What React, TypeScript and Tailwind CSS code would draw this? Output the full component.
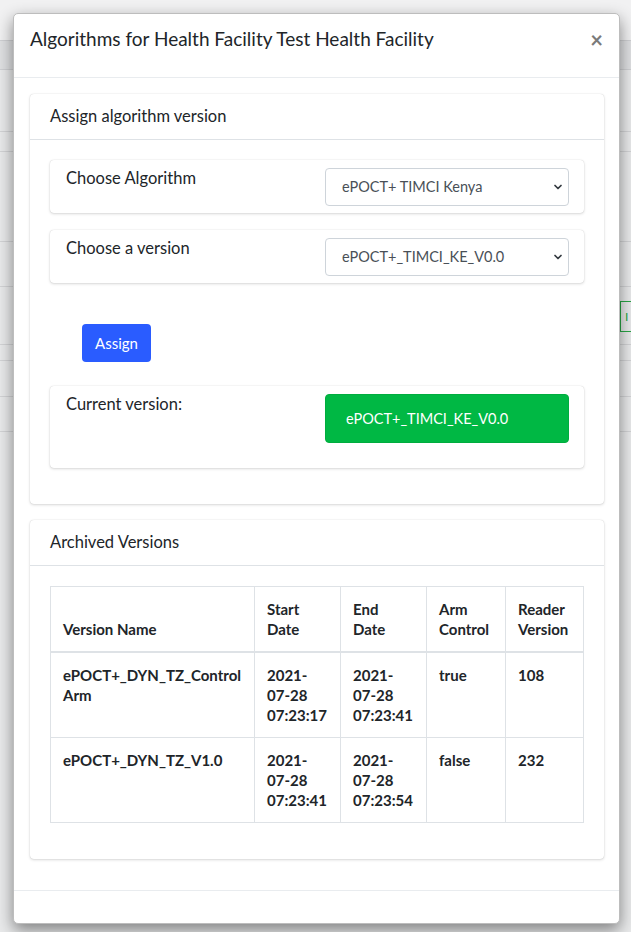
import React from 'react';
import { ChevronDown } from 'lucide-react';

const font = { fontFamily: 'Lato, "Liberation Sans", sans-serif' };

const rows = [
  { name: 'ePOCT+_DYN_TZ_Control Arm', start: ['2021-', '07-28', '07:23:17'], end: ['2021-', '07-28', '07:23:41'], arm: 'true', reader: '108' },
  { name: 'ePOCT+_DYN_TZ_V1.0', start: ['2021-', '07-28', '07:23:41'], end: ['2021-', '07-28', '07:23:54'], arm: 'false', reader: '232' },
];

const FakeSelect: React.FC<{ value: string }> = ({ value }) => (
  <div className="flex h-[38px] w-[244px] items-center justify-between rounded border border-[#ced4da] bg-white pl-4 pr-[4px] text-[14.5px] text-[#495057]">
    <span>{value}</span>
    <ChevronDown size={12} strokeWidth={3.5} className="text-[#343a40]" />
  </div>
);

const Backdrop: React.FC = () => (
  <div className="flex flex-col">
    <div className="h-[40px] bg-[#f1f1f2]" />
    <div className="h-[30px] border-y border-[#cfd0d3] bg-[#dfe0e2]" />
    <div className="h-[62px] border-b border-[#d3d4d6]" />
    <div className="h-[20px] border-b border-[#d3d4d6]" />
    <div className="h-[90px] border-b border-[#d3d4d6]" />
    <div className="h-[45px] border-b border-[#d3d4d6]" />
    <div className="h-[58px] border-b border-[#d3d4d6]" />
    <div className="h-[16px] border-b border-[#d3d4d6]" />
    <div className="h-[36px] border-b border-[#d3d4d6]" />
    <div className="h-[35px] border-b border-[#d3d4d6]" />
  </div>
);

const sub = 'rounded-[4px] shadow-[0_0_1px_rgba(0,0,0,0.2),0_1px_3px_rgba(0,0,0,0.15)]';

export default function App() {
  return (
    <div className="relative h-[932px] w-[631px] overflow-hidden bg-[#e9eaeb]" style={font}>
      <Backdrop />
      <div className="absolute left-[620px] top-[301px] flex h-[31px] w-[20px] items-center border border-[#28a745] pl-[4px] text-[12px] text-[#28a745]">I</div>

      <div className="absolute left-[13px] top-[13px] flex h-[911px] w-[607px] flex-col rounded-[5px] border border-[#bdbdbd] bg-white shadow-[0_6px_16px_rgba(0,0,0,0.45)]">
        <div className="flex h-[64px] items-center justify-between border-b border-[#e9ecef] pb-[12px] pl-[16px] pr-[16px]">
          <h4 className="text-[19px] text-[#212529]">Algorithms for Health Facility Test Health Facility</h4>
          <span className="text-[22px] font-bold leading-none text-[#7a7a7a]">×</span>
        </div>

        <div className="flex flex-1 flex-col gap-[16px] py-[16px] pl-[16px] pr-[15px]">
          <div className={`bg-white ${sub}`}>
            <div className="flex h-[46px] items-center border-b border-[#dee2e6] px-[20px] text-[16.5px] text-[#212529]">Assign algorithm version</div>
            <div className="flex flex-col px-[20px] pb-[36px] pt-[20px]">
              <div className={`flex h-[53px] items-start justify-between pl-[16px] pr-[15px] pt-[8px] ${sub}`}>
                <span className="-mt-[2px] text-[16.5px] text-[#212529]">Choose Algorithm</span>
                <FakeSelect value="ePOCT+ TIMCI Kenya" />
              </div>
              <div className={`mt-[17px] flex h-[53px] items-start justify-between pl-[16px] pr-[15px] pt-[8px] ${sub}`}>
                <span className="-mt-[2px] text-[16.5px] text-[#212529]">Choose a version</span>
                <FakeSelect value="ePOCT+_TIMCI_KE_V0.0" />
              </div>
              <div className="mt-[41px] pl-[32px]">
                <button className="h-[38px] w-[69px] rounded-[4px] bg-[#2a5cff] text-[15px] text-white">Assign</button>
              </div>
              <div className={`mt-[24px] flex h-[82px] items-start justify-between pl-[16px] pr-[15px] pt-[8px] ${sub}`}>
                <span className="-mt-[2px] text-[16.5px] text-[#212529]">Current version:</span>
                <div className="flex h-[49px] w-[244px] items-center rounded-[4px] border border-[#00ad3f] bg-[#00b844] pl-[20px] text-[14.5px] text-white">ePOCT+_TIMCI_KE_V0.0</div>
              </div>
            </div>
          </div>

          <div className={`bg-white ${sub}`}>
            <div className="flex h-[46px] items-center border-b border-[#dee2e6] px-[20px] text-[16.5px] text-[#212529]">Archived Versions</div>
            <div className="px-[20px] pb-[36px] pt-[20px]">
              <table className="w-full border-collapse text-[15px] font-bold leading-5 text-[#212529]">
                <thead>
                  <tr className="border-b-2 border-[#dee2e6]">
                    <th className="w-[204px] border border-[#dee2e6] p-[12px] text-left align-bottom">Version Name</th>
                    <th className="w-[86px] border border-[#dee2e6] p-[12px] text-left align-bottom">Start<br />Date</th>
                    <th className="w-[86px] border border-[#dee2e6] p-[12px] text-left align-bottom">End<br />Date</th>
                    <th className="w-[79px] border border-[#dee2e6] p-[12px] text-left align-bottom">Arm<br />Control</th>
                    <th className="border border-[#dee2e6] p-[12px] text-left align-bottom">Reader<br />Version</th>
                  </tr>
                </thead>
                <tbody>
                  {rows.map((r) => (
                    <tr key={r.name}>
                      <td className="border border-[#dee2e6] p-[12px] align-top">{r.name}</td>
                      <td className="border border-[#dee2e6] p-[12px] align-top">{r.start.map((s) => <div key={s}>{s}</div>)}</td>
                      <td className="border border-[#dee2e6] p-[12px] align-top">{r.end.map((s) => <div key={s}>{s}</div>)}</td>
                      <td className="border border-[#dee2e6] p-[12px] align-top">{r.arm}</td>
                      <td className="border border-[#dee2e6] p-[12px] align-top">{r.reader}</td>
                    </tr>
                  ))}
                </tbody>
              </table>
            </div>
          </div>
        </div>

        <div className="h-[33px] border-t border-[#e9ecef]" />
      </div>
    </div>
  );
}
